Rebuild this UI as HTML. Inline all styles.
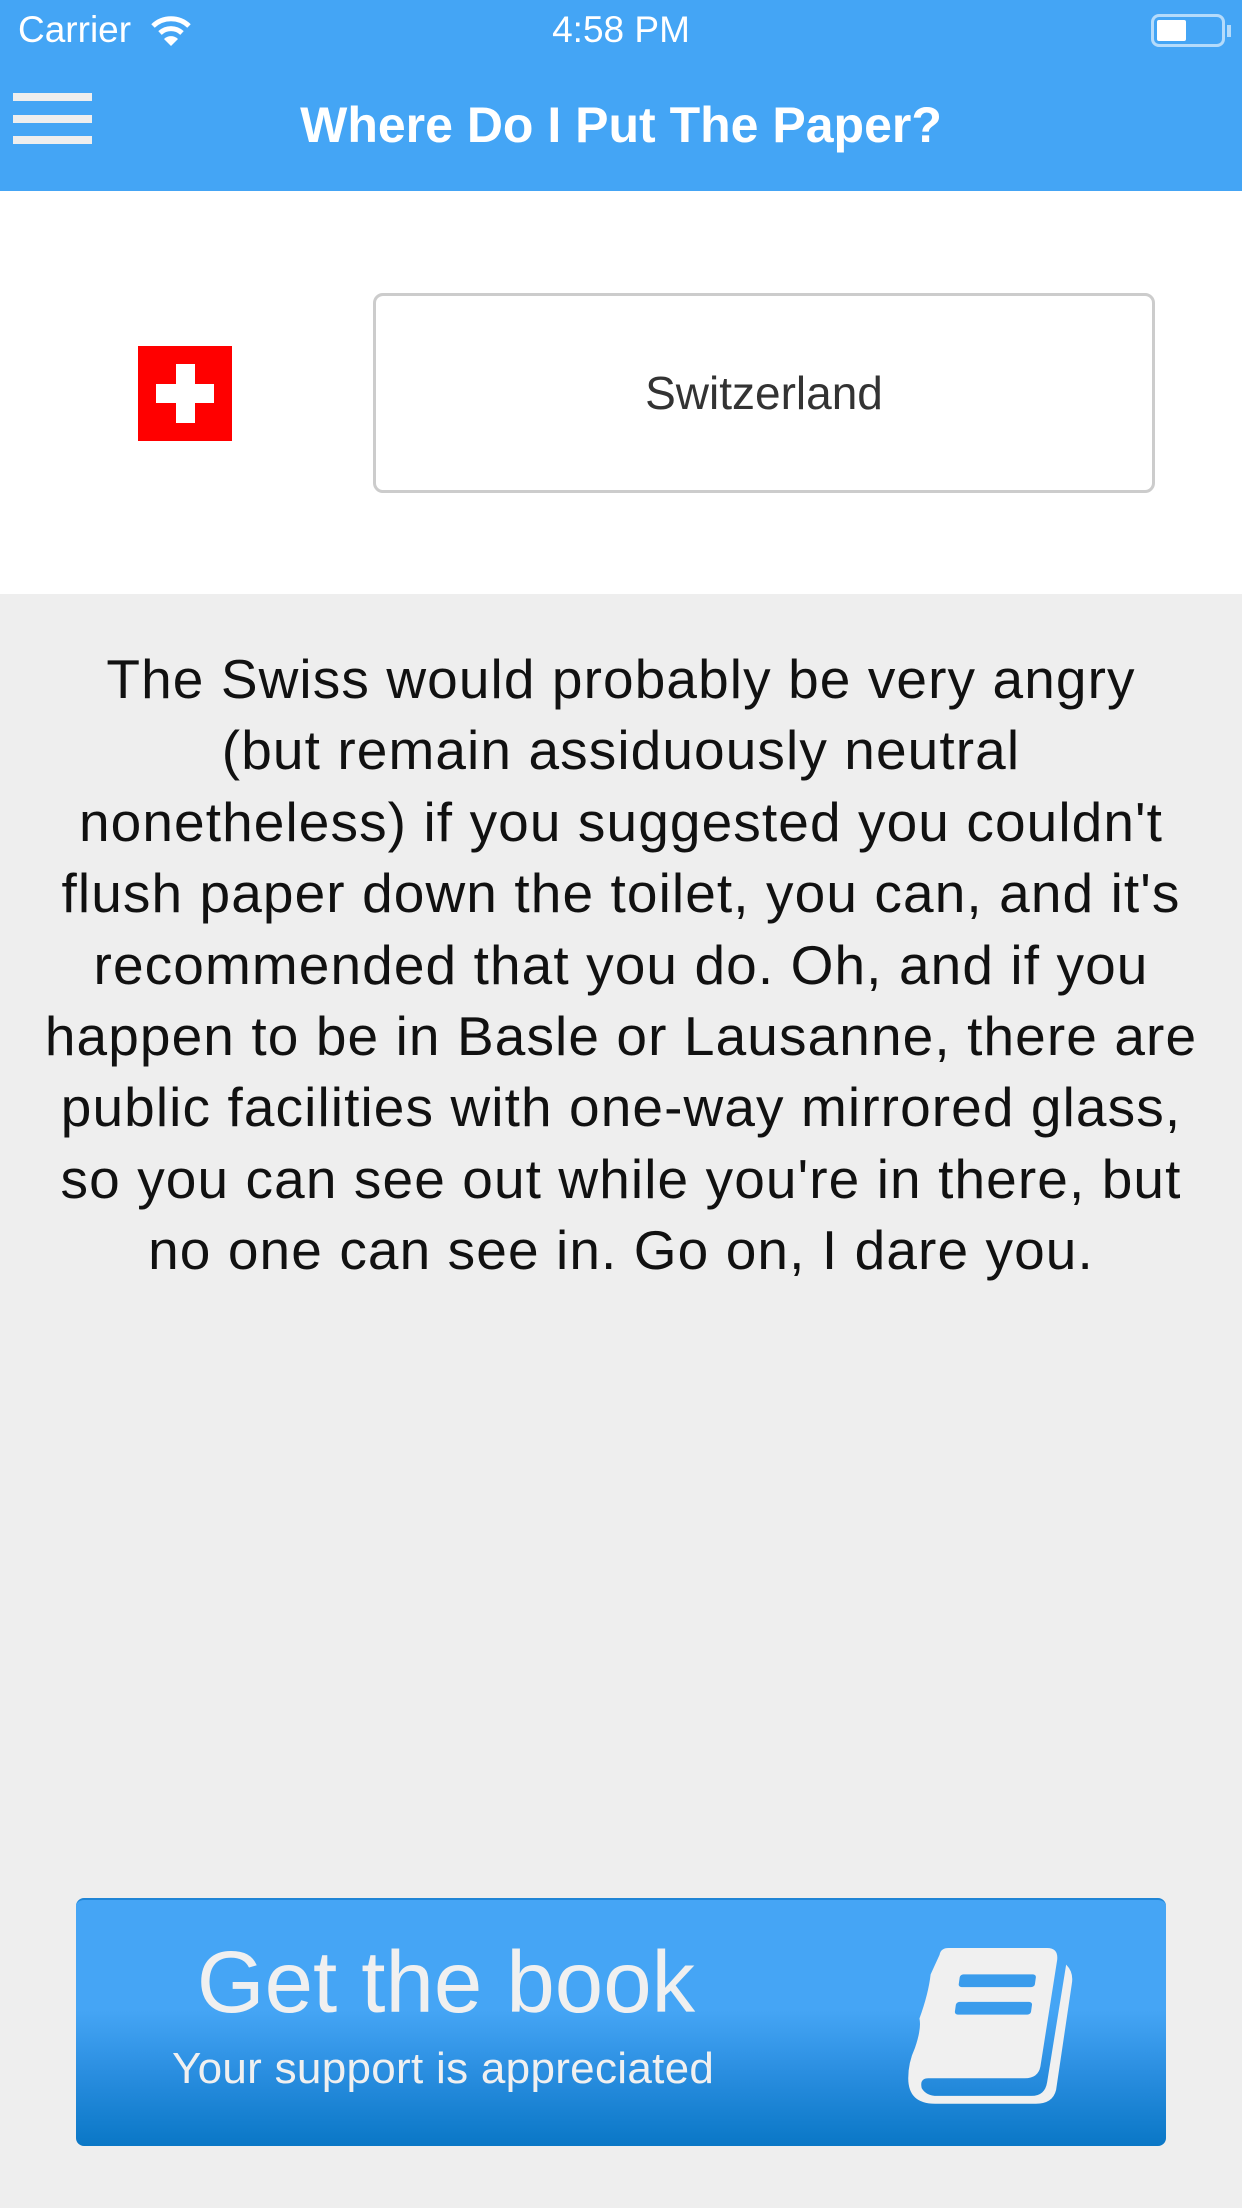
<!DOCTYPE html>
<html><head><meta charset="utf-8"><style>
*{margin:0;padding:0;box-sizing:border-box}
html,body{width:1242px;height:2208px;overflow:hidden;background:#eeeeee;font-family:"Liberation Sans",sans-serif}
.hdr{position:absolute;left:0;top:0;width:1242px;height:191px;background:#44a5f5;color:#fff}
.white{position:absolute;left:0;top:191px;width:1242px;height:403px;background:#fff}
.abs{position:absolute}
.body{position:absolute;left:0;top:644px;width:1242px;text-align:center;font-size:55px;letter-spacing:1.1px;line-height:71.4px;color:#111;white-space:nowrap}
.btn{position:absolute;left:76px;top:1898px;width:1090px;height:248px;border-radius:8px;background:linear-gradient(#45a5f5 0%,#45a5f5 45%,#2a8ee0 70%,#0a77c6 100%);border-top:2px solid #1f85d6}
</style></head><body>
<div class="hdr">
 <div class="abs" style="left:18px;top:9px;font-size:37px">Carrier</div>
 <svg class="abs" style="left:150px;top:14px" width="42" height="34" viewBox="0 0 42 34"><path d="M3 12 A26 26 0 0 1 39 12" stroke="#fff" stroke-width="5" fill="none"/><path d="M10 19 A16 16 0 0 1 32 19" stroke="#fff" stroke-width="5" fill="none"/><path d="M21 32 L14 25 A10 10 0 0 1 28 25 Z" fill="#fff"/></svg>
 <div class="abs" style="left:0;width:1242px;top:9px;text-align:center;font-size:37px">4:58 PM</div>
 <div class="abs" style="left:1151px;top:14px;width:74px;height:33px;border:3px solid rgba(255,255,255,.6);border-radius:8px"><div style="position:absolute;left:3px;top:3px;width:29px;height:21px;background:#fff;border-radius:2px"></div></div>
 <div class="abs" style="left:1227px;top:25px;width:4px;height:12px;background:rgba(255,255,255,.6)"></div>
 <div class="abs" style="left:13px;top:93px;width:79px;height:8px;background:#eee"></div>
 <div class="abs" style="left:13px;top:115px;width:79px;height:8px;background:#eee"></div>
 <div class="abs" style="left:13px;top:136px;width:79px;height:8px;background:#eee"></div>
 <div class="abs" style="left:0;width:1242px;top:96px;text-align:center;font-size:50px;font-weight:bold">Where Do I Put The Paper?</div>
</div>
<div class="white">
 <div class="abs" style="left:138px;top:155px;width:94px;height:95px;background:#ff0000">
  <div class="abs" style="left:38px;top:18px;width:19px;height:59px;background:#fff"></div>
  <div class="abs" style="left:18px;top:38px;width:58px;height:19px;background:#fff"></div>
 </div>
 <div class="abs" style="left:373px;top:102px;width:782px;height:200px;border:3px solid #ccc;border-radius:10px;text-align:center;line-height:194px;font-size:46px;color:#333">Switzerland</div>
</div>
<div class="body">The Swiss would probably be very angry<br>(but remain assiduously neutral<br>nonetheless) if you suggested you couldn't<br>flush paper down the toilet, you can, and it's<br>recommended that you do. Oh, and if you<br>happen to be in Basle or Lausanne, there are<br>public facilities with one-way mirrored glass,<br>so you can see out while you're in there, but<br>no one can see in. Go on, I dare you.</div>
<div class="btn">
 <div class="abs" style="left:110px;top:33px;width:520px;text-align:center;font-size:87px;color:#f0f0f0;white-space:nowrap">Get the book</div>
 <div class="abs" style="left:96px;top:144px;width:520px;text-align:center;font-size:44px;letter-spacing:0.3px;color:#f0f0f0;white-space:nowrap">Your support is appreciated</div>
 <svg class="abs" style="left:830px;top:45px" width="180" height="160" viewBox="0 0 180 160" preserveAspectRatio="none">
  <g transform="scale(1.12,0.98)">
  <path d="M38 3 L126 3 Q136 3 135 15 L120 124 Q118 136 106 136 L20 136 Q12 136 14 146 Q18 154 28 154 L112 154 Q124 154 126 140 L143 20 Q150 28 148 40 L134 148 Q131 162 116 162 L26 162 Q2 162 2 136 Q2 120 8 105 Q14 85 12 75 Q20 50 22 30 Q26 20 30 10 Q31 3 38 3 Z" fill="#f0f0f0"/>
  <rect x="52" y="30" width="68" height="13" rx="3" fill="#3a9cec" transform="skewX(-7)"/>
  <rect x="52" y="58" width="68" height="13" rx="3" fill="#3a9cec" transform="skewX(-7)"/>
  </g>
 </svg>
</div>
</body></html>
